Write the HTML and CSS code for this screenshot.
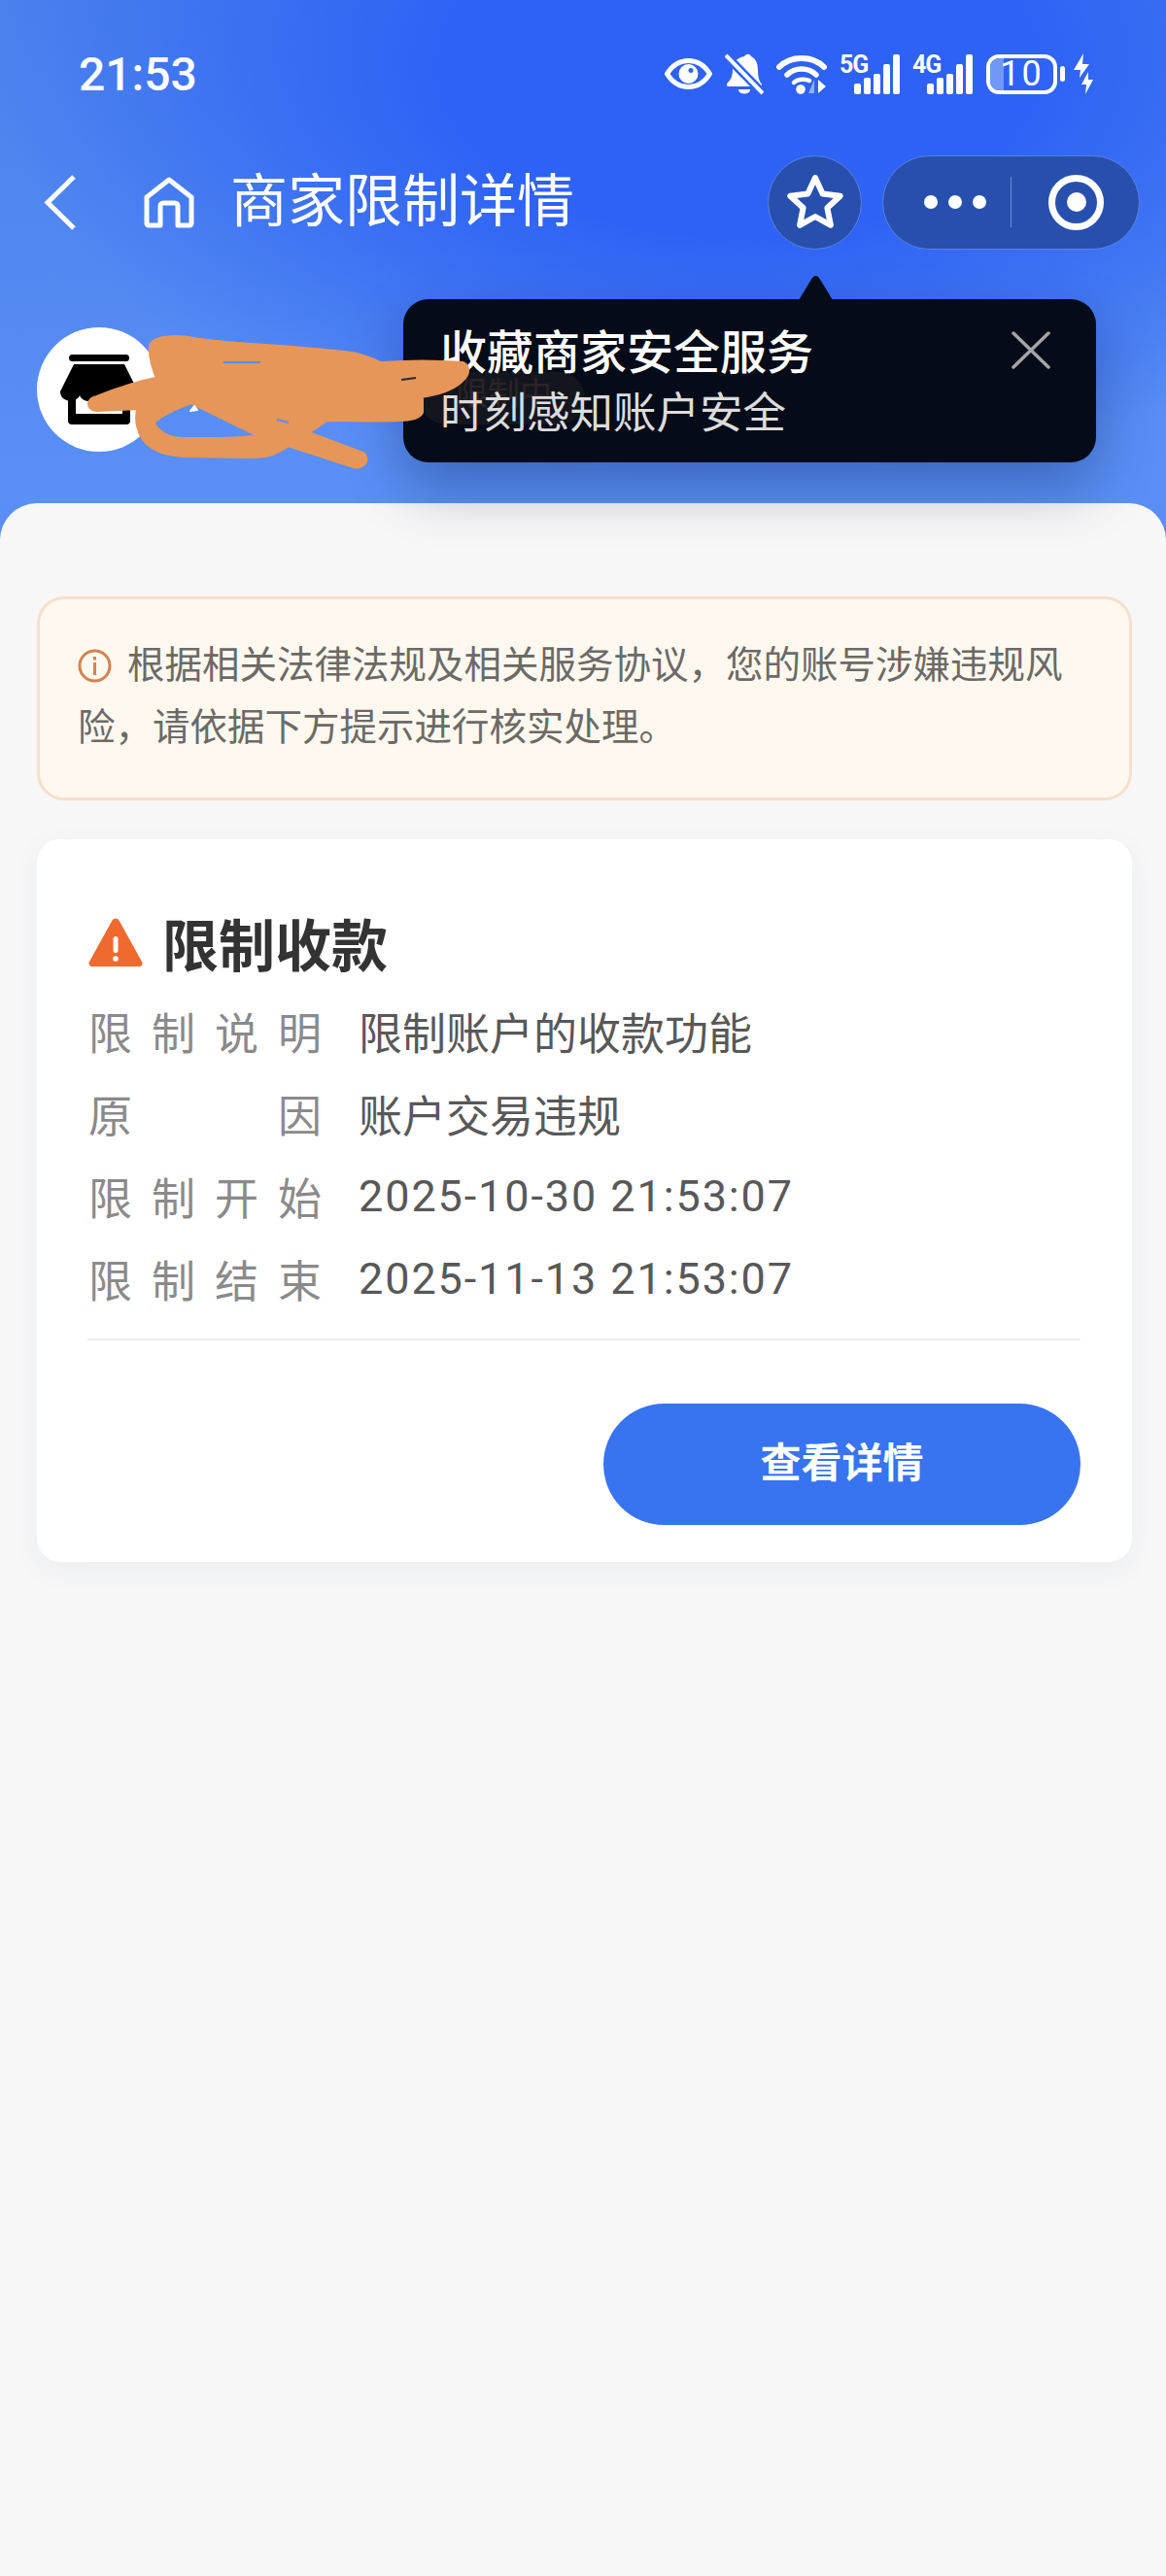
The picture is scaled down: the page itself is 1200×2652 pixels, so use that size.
FILE: index.html

```html
<!DOCTYPE html>
<html lang="zh-CN">
<head>
  <meta charset="UTF-8">
  <title>商家限制详情</title>
  <meta name="viewport" content="width=device-width, initial-scale=1.0">
  <link rel="stylesheet" href="styles.css">
</head>
<body>
  <header class="top">
    <div class="status">
      <span class="time">21:53</span>
      <div class="status-icons">
        <svg width="49" height="32" viewBox="0 0 49 32">
          <path d="M2.5 16C8 7 15 2.500 24.500 2.500S41 7 46.500 16C41 25 34 29.500 24.500 29.500S8 25 2.500 16Z" fill="none" stroke="#fff" stroke-width="5"/>
          <circle cx="24.500" cy="16" r="10" fill="#fff"/>
          <circle cx="27" cy="12.500" r="2.500" fill="#2f64f4"/>
        </svg>
        <svg width="40" height="43" viewBox="0 0 40 43">
          <path d="M20 3c2-3 6-3 7 0 6 3 7 9 7 15 0 6 1 10 4 14v2H4c-2 0-3-2-1-4 4-4 5-8 5-14 0-7 4-11 12-13Z" fill="#fff"/>
          <path d="M14 37h12c0 6-12 6-12 0Z" fill="#fff"/>
          <path d="M1 2 39 41" stroke="#2f64f4" stroke-width="9"/>
          <path d="M1 2 39 41" stroke="#fff" stroke-width="4"/>
        </svg>
        <svg width="52" height="41" viewBox="0 0 52 41">
          <path d="M3 13C15 1 37 1 49 13" fill="none" stroke="#fff" stroke-width="6" stroke-linecap="round"/>
          <path d="M11 21C19 13 33 13 41 21" fill="none" stroke="#fff" stroke-width="5.500" stroke-linecap="round"/>
          <path d="M18 29C22 25 30 25 34 27" fill="none" stroke="#fff" stroke-width="4.500" stroke-linecap="round"/>
          <circle cx="25" cy="36" r="4.800" fill="#fff"/>
          <path d="M39 26v14h-6Z" fill="#8fb0fa"/>
          <path d="M43 26l8 7-8 7Z" fill="#fff"/>
        </svg>
        <div class="signal">
          <span class="net">5G</span>
          <svg width="62" height="41" viewBox="0 0 62 41">
            <rect x="15" y="30" width="7" height="11" rx="2" fill="#fff"/>
            <rect x="25" y="24" width="7" height="17" rx="2" fill="#fff"/>
            <rect x="35" y="20" width="7" height="21" rx="2" fill="#fff"/>
            <rect x="45" y="10" width="7" height="31" rx="2" fill="#fff"/>
            <rect x="55" y="0" width="7" height="41" rx="2" fill="#fff"/>
          </svg>
        </div>
        <div class="signal">
          <span class="net">4G</span>
          <svg width="62" height="41" viewBox="0 0 62 41">
            <rect x="15" y="30" width="7" height="11" rx="2" fill="#fff"/>
            <rect x="25" y="24" width="7" height="17" rx="2" fill="#fff"/>
            <rect x="35" y="20" width="7" height="21" rx="2" fill="#fff"/>
            <rect x="45" y="10" width="7" height="31" rx="2" fill="#fff"/>
            <rect x="55" y="0" width="7" height="41" rx="2" fill="#fff"/>
          </svg>
        </div>
        <div class="battery">
          <div class="battery-body"><span class="battery-level"></span><span class="battery-num">10</span></div>
          <span class="battery-nub"></span>
        </div>
        <svg width="22" height="42" viewBox="0 0 22 42">
          <path d="M11 0 1 17h7l-1 8L17 11h-7Z" fill="#fff"/>
          <path d="M16 19 9 32h5l-1 10 8-15h-5Z" fill="#fff"/>
        </svg>
      </div>
    </div>

    <nav class="nav">
      <svg class="nav-back" width="33" height="57" viewBox="0 0 33 57">
        <path d="M31 2 4 28.500 31 55" fill="none" stroke="#fff" stroke-width="5"/>
      </svg>
      <svg class="nav-home" width="52" height="53" viewBox="0 0 52 53">
        <path d="M3 21 26 3l23 18v27a2 2 0 0 1-2 2H35V30a3 3 0 0 0-3-3H20a3 3 0 0 0-3 3v20H5a2 2 0 0 1-2-2Z" fill="none" stroke="#fff" stroke-width="5" stroke-linejoin="round"/>
      </svg>
      <h1 class="nav-title">商家限制详情</h1>
      <div class="nav-star">
        <svg width="58" height="60" viewBox="-3 -3 58 60">
          <path d="M26 2 33.600 18.500 51.700 20.700 38.400 33 41.900 50.800 26 42 10.100 50.800 13.600 33 .3 20.700 18.400 18.500Z" fill="none" stroke="#fff" stroke-width="6" stroke-linejoin="round"/>
        </svg>
      </div>
      <div class="nav-capsule">
        <div class="capsule-dots"><i></i><i></i><i></i></div>
        <span class="capsule-line"></span>
        <div class="capsule-target"><i></i></div>
      </div>
    </nav>

    <div class="merchant">
      <div class="avatar">
        <svg width="80" height="72" viewBox="0 0 80 72">
          <rect x="9" y="0" width="62" height="7" rx="3.500" fill="#000"/>
          <path d="M14 10h52l14 28c0 12-17 12-20 4-3 8-17 8-20 0-3 8-17 8-20 0-3 8-20 8-20-4Z" fill="#000"/>
          <path d="M8 43h8v18h48V43h8v25a4 4 0 0 1-4 4H12a4 4 0 0 1-4-4Z" fill="#000"/>
        </svg>
      </div>
    </div>

    <div class="tip">
      <div class="tip-badge">限制中</div>
      <div class="tip-text">
        <div class="tip-title">收藏商家安全服务</div>
        <div class="tip-sub">时刻感知账户安全</div>
      </div>
      <svg class="tip-close" width="40" height="39" viewBox="0 0 40 39">
        <path d="M2 2 38 37M38 2 2 37" stroke="#a3a5a8" stroke-width="3.500" stroke-linecap="round"/>
      </svg>
    </div>

    <svg class="scribble" width="1200" height="518" viewBox="0 0 1200 518">
      <path fill-rule="evenodd" d="M157 356C160 348 185 348 199 351C230 357 300 358 362 366C378 369 385 374 392 376C420 374 450 374 476 376C480 378 480 384 476 388C468 398 450 404 432 406L432 424C430 428 420 430 410 430C390 431 360 430 336 430L312 446L373 469C377 474 372 480 364 478L296 456C280 468 270 468 250 468L190 467C165 466 148 458 144 438C142 430 143 425 145 418L100 420C92 420 92 412 100 411C120 403 140 396 165 391C160 380 156 366 157 356ZM155 434C165 425 180 418 197 412L274 450C250 455 215 454 190 454C172 454 160 446 155 434Z"/>
      <path class="scribble-gap" d="M230 373 268 373"/>
      <path class="scribble-gap" d="M285 432 297 435"/>
      <path class="scribble-dark" d="M413 391 428 389"/>
      <path class="scribble-speck" d="M196 423 200 418 203 422Z"/>
    </svg>
  </header>

  <main class="sheet">
    <div class="notice">
      <svg class="notice-icon" width="35" height="35" viewBox="0 0 35 35">
        <circle cx="17.500" cy="17.500" r="15.500" fill="none" stroke="#d28350" stroke-width="3"/>
        <rect x="16" y="14" width="3" height="13" fill="#d28350"/>
        <rect x="16" y="8" width="3" height="3.500" fill="#d28350"/>
      </svg>根据相关法律法规及相关服务协议，您的账号涉嫌违规风险，请依据下方提示进行核实处理。
    </div>

    <section class="card">
      <div class="card-title">
        <svg width="56" height="50" viewBox="0 0 56 50">
          <path d="M24.500 2.500a4 4 0 0 1 7 0L55 45a3.300 3.300 0 0 1-3 5H4a3.300 3.300 0 0 1-3-5Z" fill="#ee6a2f"/>
          <rect x="25.500" y="19" width="5" height="17" rx="2.500" fill="#fff"/>
          <circle cx="28" cy="42" r="2.800" fill="#fff"/>
        </svg>
        <h2>限制收款</h2>
      </div>
      <div class="row"><span class="row-label">限制说明</span><span class="row-value">限制账户的收款功能</span></div>
      <div class="row"><span class="row-label">原因</span><span class="row-value">账户交易违规</span></div>
      <div class="row"><span class="row-label">限制开始</span><span class="row-value row-date">2025-10-30 21:53:07</span></div>
      <div class="row"><span class="row-label">限制结束</span><span class="row-value row-date">2025-11-13 21:53:07</span></div>
      <div class="card-line"></div>
      <div class="card-foot">
        <button class="btn">查看详情</button>
      </div>
    </section>
  </main>
</body>
</html>
```

FILE: styles.css

```css
* {
  box-sizing: border-box;
}
body {
  margin: 0;
  height: 2652px;
  display: flex;
  flex-direction: column;
  background-color: #5a8ef5;
  font-family: Roboto, "Noto Sans CJK SC", sans-serif;
  color: #333;
}

/* blue top area */
.top {
  position: relative;
  height: 518px;
  padding-bottom: 53px;
  background:
    radial-gradient(ellipse 760px 430px at 760px 70px, #2e62f5 40%, rgba(46, 98, 245, 0) 100%),
    linear-gradient(180deg, #4a80ec 0%, #5a90f6 100%);
  color: #fff;
}
.status {
  height: 152px;
  display: flex;
  align-items: center;
  justify-content: space-between;
  padding: 0 74px 0 81px;
}
.time {
  font-size: 48px;
  font-weight: 500;
}
.status-icons {
  display: flex;
  align-items: center;
  gap: 13px;
}
.signal {
  position: relative;
  width: 62px;
  height: 41px;
}
.signal svg {
  display: block;
}
.net {
  position: absolute;
  left: 0;
  top: -2px;
  font-size: 25px;
  line-height: 26px;
  font-weight: 700;
  letter-spacing: -1px;
}
.battery {
  display: flex;
  align-items: center;
  gap: 3px;
  margin: 0 -5px 0 1px;
}
.battery-body {
  position: relative;
  width: 73px;
  height: 41px;
  border: 4px solid #fff;
  border-radius: 13px;
  display: flex;
  align-items: center;
  justify-content: center;
}
.battery-level {
  position: absolute;
  left: 0;
  top: 0;
  bottom: 0;
  width: 14px;
  border-radius: 9px 0 0 9px;
  background-color: #6f98f8;
}
.battery-num {
  position: relative;
  font-size: 36px;
  line-height: 33px;
  letter-spacing: 2px;
}
.battery-nub {
  width: 5px;
  height: 16px;
  border-radius: 3px;
  background-color: #fff;
}

.nav {
  height: 112px;
  display: flex;
  align-items: center;
  padding: 0 27px 0 45px;
}
.nav-home {
  margin-left: 70px;
}
.nav-title {
  margin: 0 0 0 37px;
  font-size: 59px;
  font-weight: 400;
  line-height: 66px;
  white-space: nowrap;
}
.nav-star {
  width: 97px;
  height: 97px;
  margin-left: auto;
  border-radius: 50%;
  background-color: #2750ae;
  border: 1px solid #5a82e0;
  display: flex;
  align-items: center;
  justify-content: center;
}
.nav-capsule {
  width: 265px;
  height: 97px;
  margin-left: 21px;
  border-radius: 49px;
  background-color: #2750ae;
  border: 1px solid #5a82e0;
  display: flex;
  align-items: center;
}
.capsule-dots {
  width: 131px;
  padding-left: 42px;
  display: flex;
  gap: 11px;
}
.capsule-dots i {
  width: 14px;
  height: 14px;
  border-radius: 50%;
  background-color: #fff;
}
.capsule-line {
  width: 1px;
  height: 52px;
  background-color: #6a8ad6;
}
.capsule-target {
  width: 57px;
  height: 57px;
  margin-left: 38px;
  border: 7px solid #fff;
  border-radius: 50%;
  display: flex;
  align-items: center;
  justify-content: center;
}
.capsule-target i {
  width: 20px;
  height: 20px;
  border-radius: 50%;
  background-color: #fff;
}

.merchant {
  margin-top: 73px;
  padding-left: 38px;
}
.avatar {
  width: 128px;
  height: 128px;
  border-radius: 50%;
  background-color: #fff;
  display: flex;
  align-items: center;
  justify-content: center;
}

/* tooltip over the header */
.tip {
  position: absolute;
  left: 415px;
  top: 308px;
  z-index: 2;
  width: 713px;
  height: 168px;
  padding: 26px 47px 0 38px;
  display: flex;
  justify-content: space-between;
  align-items: flex-start;
  background-color: #050b18;
  border-radius: 26px;
  box-shadow: 0 26px 60px rgba(4, 14, 50, 0.3);
}
.tip::before {
  content: "";
  position: absolute;
  left: 407px;
  top: -26px;
  width: 35px;
  height: 27px;
  background-color: #050b18;
  clip-path: path("M0 27 L14 4 Q17.5 0 21 4 L35 27 Z");
}
.tip-badge {
  position: absolute;
  left: 17px;
  top: 75px;
  width: 170px;
  height: 54px;
  border-radius: 27px;
  background-color: #14161e;
  color: #2c2426;
  font-size: 33px;
  line-height: 46px;
  text-align: right;
  padding-right: 34px;
}
.tip-text {
  position: relative;
}
.tip-title {
  font-size: 48px;
  line-height: 60px;
  font-weight: 500;
}
.tip-sub {
  margin-top: 2px;
  font-size: 44.5px;
  line-height: 60px;
  color: #dcdcdc;
}
.tip-close {
  position: relative;
  margin-top: 7px;
}

.scribble {
  position: absolute;
  left: 0;
  top: 0;
  z-index: 3;
  fill: #e59658;
  stroke: #e59658;
  stroke-width: 8;
  stroke-linejoin: round;
}
.scribble-gap {
  stroke: #5b8cee;
  stroke-width: 2;
  fill: none;
}
.scribble-dark {
  stroke: #2a2a30;
  stroke-width: 2;
  fill: none;
}
.scribble-speck {
  fill: #fff;
  stroke: #fff;
  stroke-width: 2;
}

/* grey sheet */
.sheet {
  flex: 1;
  padding: 96px 35px 0 38px;
  background-color: #f7f7f8;
  border-radius: 38px 38px 0 0;
}
.notice {
  height: 210px;
  padding: 36px 52px 0 39px;
  background-color: #fef8ef;
  border: 3px solid #f6dfcc;
  border-radius: 28px;
  color: #6b6a66;
  font-size: 38.5px;
  line-height: 64px;
}
.notice-icon {
  vertical-align: -5px;
  margin-right: 16px;
}
.card {
  margin-top: 40px;
  height: 744px;
  padding: 63px 53px 0 53px;
  background-color: #fff;
  border-radius: 24px;
  box-shadow: 0 8px 30px rgba(40, 50, 70, 0.05);
}
.card-title {
  height: 86px;
  margin-bottom: 6px;
  display: flex;
  align-items: center;
  gap: 20px;
}
.card-title h2 {
  margin: 0;
  font-size: 58px;
  font-weight: 700;
  color: #333;
}
.row {
  height: 85px;
  display: flex;
  align-items: center;
  font-size: 45px;
}
.row-label {
  width: 240px;
  margin-right: 38px;
  color: #8a8a8a;
  text-align: justify;
  text-align-last: justify;
}
.row-value {
  color: #585858;
}
.row-date {
  letter-spacing: 1.9px;
}
.card-line {
  height: 2px;
  margin: 19px 0 0 -1px;
  background-color: #ececee;
}
.card-foot {
  margin-top: 65px;
  display: flex;
  justify-content: flex-end;
}
.btn {
  width: 491px;
  height: 125px;
  padding: 0 0 10px;
  border: none;
  border-radius: 63px;
  background-color: #3873f0;
  color: #fff;
  font-family: inherit;
  font-size: 42px;
  font-weight: 700;
}
```
